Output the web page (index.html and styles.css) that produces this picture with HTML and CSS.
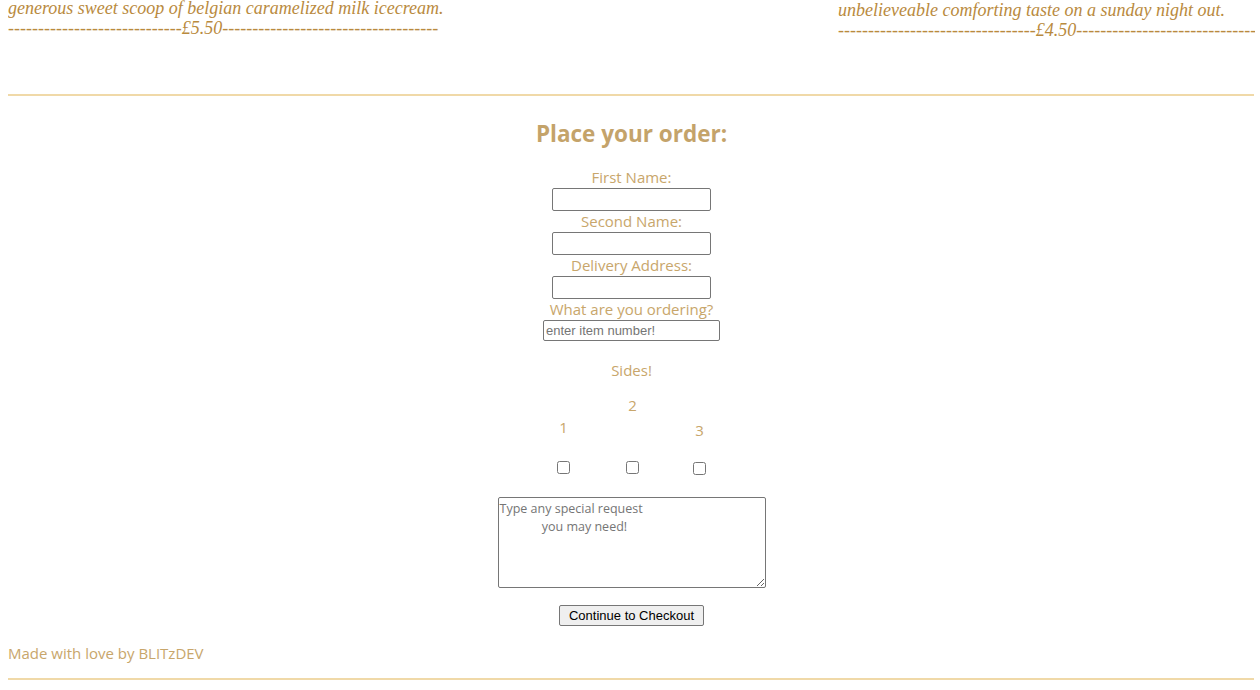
FILE: index.html
```html
<!DOCTYPE html>
<html lang="en">
<head>
<meta charset="utf-8">
<title>Order</title>
<link rel="stylesheet" href="styles.css">
</head>
<body>
<div class="menu">
  <div class="menu-item">
    <p class="desc">generous sweet scoop of belgian caramelized milk icecream.</p>
    <p class="price">-----------------------------£5.50------------------------------------</p>
  </div>
  <div class="menu-item"></div>
  <div class="menu-item shifted">
    <p class="desc">unbelieveable comforting taste on a sunday night out.</p>
    <p class="price">---------------------------------£4.50----------------------------------------</p>
  </div>
</div>
<hr class="rule">
<section class="order">
  <h2 class="title">Place your order:</h2>
  <form class="form">
    <label class="label">First Name:</label>
    <input class="field" type="text">
    <label class="label">Second Name:</label>
    <input class="field" type="text">
    <label class="label">Delivery Address:</label>
    <input class="field" type="text">
    <label class="label">What are you ordering?</label>
    <input class="field wide" type="text" placeholder="enter item number!">
    <p class="label sides">Sides!</p>
    <div class="side-row">
      <div class="side s1"><span class="label">1</span><input type="checkbox" class="check"></div>
      <div class="side s2"><span class="label">2</span><input type="checkbox" class="check"></div>
      <div class="side s3"><span class="label">3</span><input type="checkbox" class="check"></div>
    </div>
    <textarea class="request" placeholder="Type any special request
             you may need!"></textarea>
    <button class="submit" type="button">Continue to Checkout</button>
  </form>
</section>
<footer class="footer">
  <p class="credit">Made with love by BLITzDEV</p>
  <hr class="rule bottom">
</footer>
</body>
</html>
```
FILE: styles.css
```css
html {
  overflow: hidden;
}
body {
  margin: 0 5px 0 8px;
  background: #ffffff;
  font-family: "Open Sans", "Noto Sans", sans-serif;
}
.menu {
  display: grid;
  grid-template-columns: 415px 415px 1fr;
  margin-top: -2px;
}
.menu-item {
  min-width: 0;
}
.menu-item.shifted {
  padding-top: 2px;
}
.desc, .price {
  margin: 0;
  font-family: "Liberation Serif", serif;
  font-style: italic;
  font-size: 18px;
  line-height: 20px;
  color: #b98a3e;
  white-space: nowrap;
}
.rule {
  border: 0;
  border-top: 2px solid #f0d9a8;
  margin: 54px 1px 0 0;
  height: 0;
}
.order {
  display: flex;
  flex-direction: column;
  align-items: center;
}
.title {
  margin: 24px 0 0;
  font-size: 22.5px;
  line-height: 28px;
  font-weight: 700;
  color: #c4a36a;
}
.form {
  display: flex;
  flex-direction: column;
  align-items: center;
  margin-top: 19px;
}
.label {
  font-size: 15px;
  line-height: 21px;
  color: #c8a66b;
}
.field {
  box-sizing: border-box;
  width: 159px;
  height: 23px;
  margin: 0;
  border: 1px solid #767676;
  border-radius: 2px;
  padding: 1px 2px;
  font-family: "Liberation Sans", Arial, sans-serif;
  font-size: 13px;
}
.field.wide {
  width: 177px;
  height: 21px;
}
.field::placeholder {
  color: #757575;
}
.sides {
  margin: 19px 0 0;
}
.side-row {
  display: flex;
  margin-top: 14px;
  align-items: flex-start;
}
.side {
  display: flex;
  flex-direction: column;
  align-items: center;
  width: 16px;
}
.check {
  width: 13px;
  height: 13px;
  margin: 0;
}
.s1 { padding-top: 22px; }
.s1 .label { margin-bottom: 23px; }
.s2 { margin-left: 53px; }
.s2 .label { margin-bottom: 45px; }
.s3 { padding-top: 25px; margin-left: 51px; }
.s3 .label { margin-bottom: 21px; }
.request {
  box-sizing: border-box;
  width: 268px;
  height: 91px;
  margin-top: 22px;
  border: 1px solid #767676;
  border-radius: 2px;
  padding: 2px 1px;
  font-family: "Open Sans", sans-serif;
  font-size: 12.5px;
  line-height: 18px;
  resize: both;
}
.request::placeholder {
  color: #757575;
}
.submit {
  margin-top: 17px;
  height: 21px;
  padding: 0 9px;
  border: 1px solid #767676;
  border-radius: 2px;
  background: #efefef;
  font-family: "Liberation Sans", Arial, sans-serif;
  font-size: 13px;
  color: #000;
}
.footer {
  margin-top: 17px;
}
.credit {
  margin: 0;
  font-size: 15px;
  line-height: 21px;
  color: #c8a66b;
}
.rule.bottom {
  margin-top: 14px;
}
```
